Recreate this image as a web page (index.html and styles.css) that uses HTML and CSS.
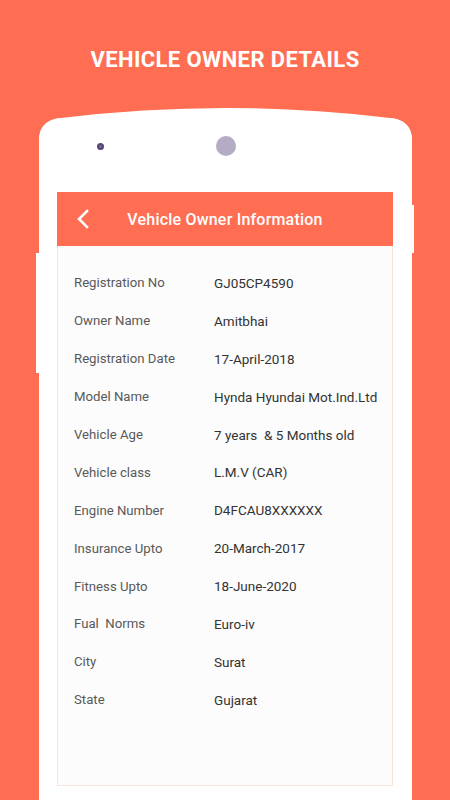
FILE: index.html
```html
<!DOCTYPE html>
<html lang="en">

<head>
    <meta charset="UTF-8" />
    <meta name="viewport" content="width=device-width, initial-scale=1.0" />
    <title>Vehicle Owner Details</title>
    <link rel="stylesheet" href="styles.css">
</head>

<body>
    <h1 class="title">VEHICLE OWNER DETAILS</h1>

    <div class="phone">
        <span class="side-btn side-btn--left"></span>
        <span class="side-btn side-btn--right"></span>

        <div class="phone-top">
            <span class="sensor"></span>
            <span class="lens"></span>
            <span></span>
        </div>

        <section class="screen">
            <header class="appbar">
                <svg class="back" width="12" height="20" viewBox="0 0 12 20">
                    <path d="M10 2 L2 10 L10 18" fill="none" stroke="#fff" stroke-width="2.6" stroke-linecap="square" />
                </svg>
                <span class="appbar-title">Vehicle Owner Information</span>
            </header>

            <dl class="details">
                <div class="row"><dt>Registration No</dt><dd>GJ05CP4590</dd></div>
                <div class="row"><dt>Owner Name</dt><dd>Amitbhai</dd></div>
                <div class="row"><dt>Registration Date</dt><dd>17-April-2018</dd></div>
                <div class="row"><dt>Model Name</dt><dd>Hynda Hyundai Mot.Ind.Ltd</dd></div>
                <div class="row"><dt>Vehicle Age</dt><dd>7 years &nbsp;&amp; 5 Months old</dd></div>
                <div class="row"><dt>Vehicle class</dt><dd>L.M.V (CAR)</dd></div>
                <div class="row"><dt>Engine Number</dt><dd>D4FCAU8XXXXXX</dd></div>
                <div class="row"><dt>Insurance Upto</dt><dd>20-March-2017</dd></div>
                <div class="row"><dt>Fitness Upto</dt><dd>18-June-2020</dd></div>
                <div class="row"><dt>Fual &nbsp;Norms</dt><dd>Euro-iv</dd></div>
                <div class="row"><dt>City</dt><dd>Surat</dd></div>
                <div class="row"><dt>State</dt><dd>Gujarat</dd></div>
            </dl>
        </section>
    </div>
</body>

</html>
```

FILE: styles.css
```css
:root {
    --coral: #ff6e52;
    --frame: #ffffff;
    --screen-bg: #fcfcfc;
    --screen-border: #fbe1dc;
    --label: #595959;
    --value: #333333;
}

* {
    box-sizing: border-box;
    margin: 0;
    padding: 0;
}

body {
    font-family: Roboto, "Noto Sans", sans-serif;
    background: var(--coral);
    height: 800px;
    overflow: hidden;
}

.title {
    padding-top: 45px;
    height: 118px;
    text-align: center;
    color: #fff;
    font-size: 22px;
    font-weight: 700;
    letter-spacing: 0.4px;
    line-height: 30px;
}

/* phone mockup */
.phone {
    position: relative;
    margin-left: 39px;
    width: 373px;
    height: 682px;
    background: var(--frame);
    border-radius: 22px 22px 0 0;
}

/* slightly arched top edge of the device */
.phone::before {
    content: "";
    position: absolute;
    top: -10px;
    left: 0;
    width: 373px;
    height: 40px;
    background: var(--frame);
    clip-path: path("M0 40 L0 32 C0 18 8 11 22 10 Q186.5 -10 351 10 C365 11 373 18 373 32 L373 40 Z");
}

.side-btn {
    position: absolute;
    background: var(--frame);
}

.side-btn--left {
    left: -3px;
    top: 135px;
    width: 3px;
    height: 120px;
}

.side-btn--right {
    right: -2px;
    top: 87px;
    width: 2px;
    height: 48px;
}

.phone-top {
    position: relative;
    display: grid;
    grid-template-columns: 1fr auto 1fr;
    align-items: start;
    padding-top: 18px;
    height: 74px;
}

.sensor {
    width: 7px;
    height: 7px;
    margin: 7px 0 0 58px;
    border-radius: 50%;
    background: #7a6a9a;
    border: 2px solid #54447a;
}

.lens {
    width: 20px;
    height: 20px;
    border-radius: 50%;
    background: #b4abc4;
}

/* screen */
.screen {
    margin: 0 19px 0 18px;
    height: 594px;
    background: var(--screen-bg);
    border: 1px solid var(--screen-border);
    border-top: 0;
}

.appbar {
    display: flex;
    align-items: center;
    height: 54px;
    margin: 0 -1px;
    padding: 0 0 0 20px;
    background: var(--coral);
    color: #fff;
}

.back {
    flex: none;
}

.appbar-title {
    flex: 1;
    text-align: center;
    padding-right: 32px;
    font-size: 16px;
    font-weight: 500;
    letter-spacing: 0.2px;
}

.details {
    padding: 18px 0 0 16px;
}

.row {
    display: grid;
    grid-template-columns: 140px 1fr;
    align-items: center;
    height: 37.9px;
}

.row dt {
    font-size: 13.2px;
    color: var(--label);
}

.row dd {
    font-size: 13.5px;
    color: var(--value);
    white-space: pre;
}
```
